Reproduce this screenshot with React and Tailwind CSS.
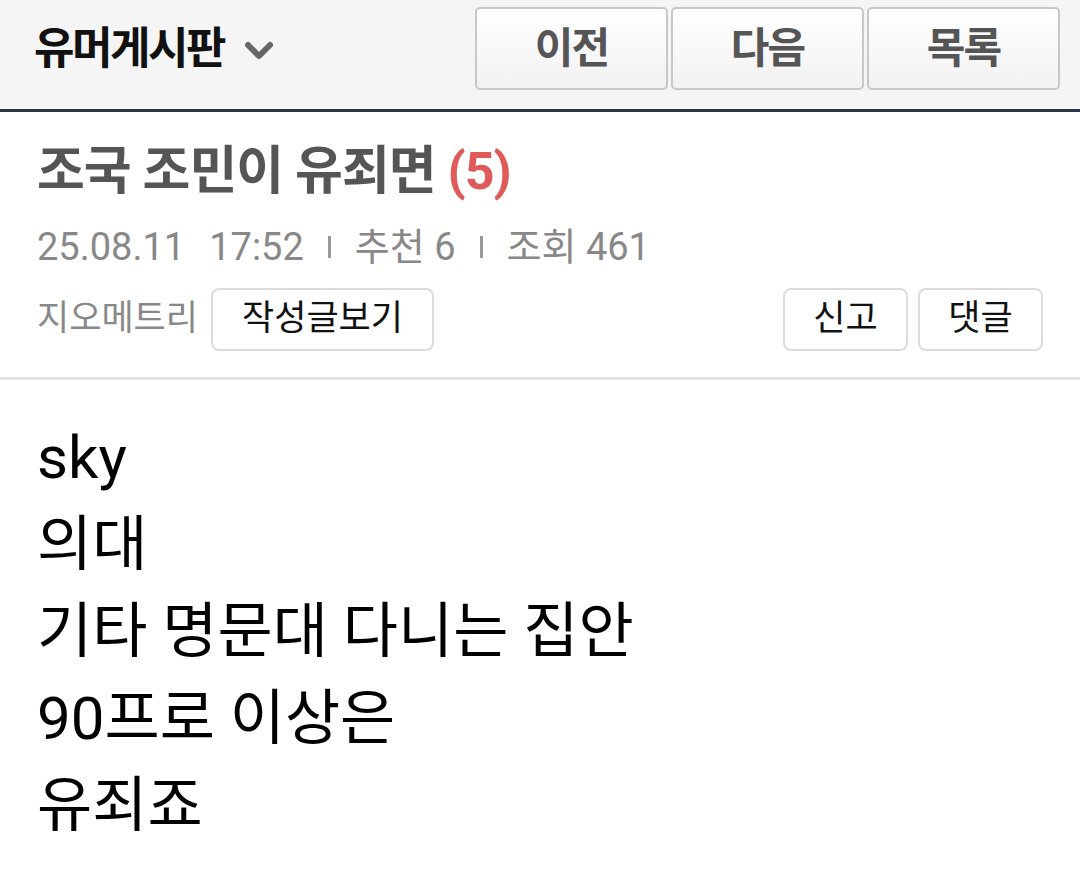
import React from "react";

const font = { fontFamily: 'Roboto, "Noto Sans CJK KR", sans-serif' };

const lines = ["sky", "의대", "기타 명문대 다니는 집안", "90프로 이상은", "유죄죠"];

const Bar = () => <span className="inline-block w-[3px] h-[22px] bg-[#999] mx-[24px]" />;

const App = () => {
  return (
    <div className="min-h-screen bg-white" style={font}>
      {/* Top bar */}
      <div className="h-[112px] bg-[#f5f5f5] border-b-[3px] border-[#253746] flex items-start pt-[7px] pl-[34px] pr-[20px]">
        <div className="h-[83px] flex items-center gap-[20px] flex-1">
          <span className="text-[44px] font-bold tracking-[-2.5px] text-[#111]">유머게시판</span>
          <svg width="30" height="20" viewBox="0 0 30 20" className="mt-[4px]">
            <path d="M4 4 L15 15 L26 4" fill="none" stroke="#666" strokeWidth="6" strokeLinecap="round" strokeLinejoin="round" />
          </svg>
        </div>
        <div className="flex gap-[3px]">
          {["이전", "다음", "목록"].map((t) => (
            <button
              key={t}
              className="w-[193px] h-[83px] rounded-[5px] border-2 border-[#c8c8c8] bg-gradient-to-b from-white to-[#f2f2f2] text-[42px] font-bold tracking-[-2px] text-[#555]"
            >
              {t}
            </button>
          ))}
        </div>
      </div>

      {/* Post header */}
      <div className="px-[37px] pt-[28px] pb-[26px] border-b-[3px] border-[#e2e2e2]">
        <h1 className="text-[52px] font-bold leading-[63px] text-[#555] tracking-[-1px]">
          조국 조민이 유죄면 <span className="text-[#e05a5a]">(5)</span>
        </h1>
        <div className="mt-[19px] h-[50px] flex items-center text-[38px] text-[#888]">
          <span>25.08.11</span>
          <span className="ml-[24px]">17:52</span>
          <Bar />
          <span>추천 6</span>
          <Bar />
          <span>조회 461</span>
        </div>
        <div className="mt-[16px] flex items-center">
          <span className="text-[35px] text-[#888]">지오메트리</span>
          <button className="ml-[13px] w-[223px] h-[63px] rounded-[8px] border-2 border-[#dcdcdc] bg-white text-[35px] text-[#111]">
            작성글보기
          </button>
          <div className="ml-auto flex gap-[10px]">
            <button className="w-[125px] h-[63px] rounded-[8px] border-2 border-[#dcdcdc] bg-white text-[35px] text-[#111]">
              신고
            </button>
            <button className="w-[125px] h-[63px] rounded-[8px] border-2 border-[#dcdcdc] bg-white text-[35px] text-[#111]">
              댓글
            </button>
          </div>
        </div>
      </div>

      {/* Body */}
      <div className="px-[37px] pt-[34px] text-[60px] leading-[87px] text-black">
        {lines.map((l) => (
          <div key={l}>{l}</div>
        ))}
      </div>
    </div>
  );
};

export default App;
